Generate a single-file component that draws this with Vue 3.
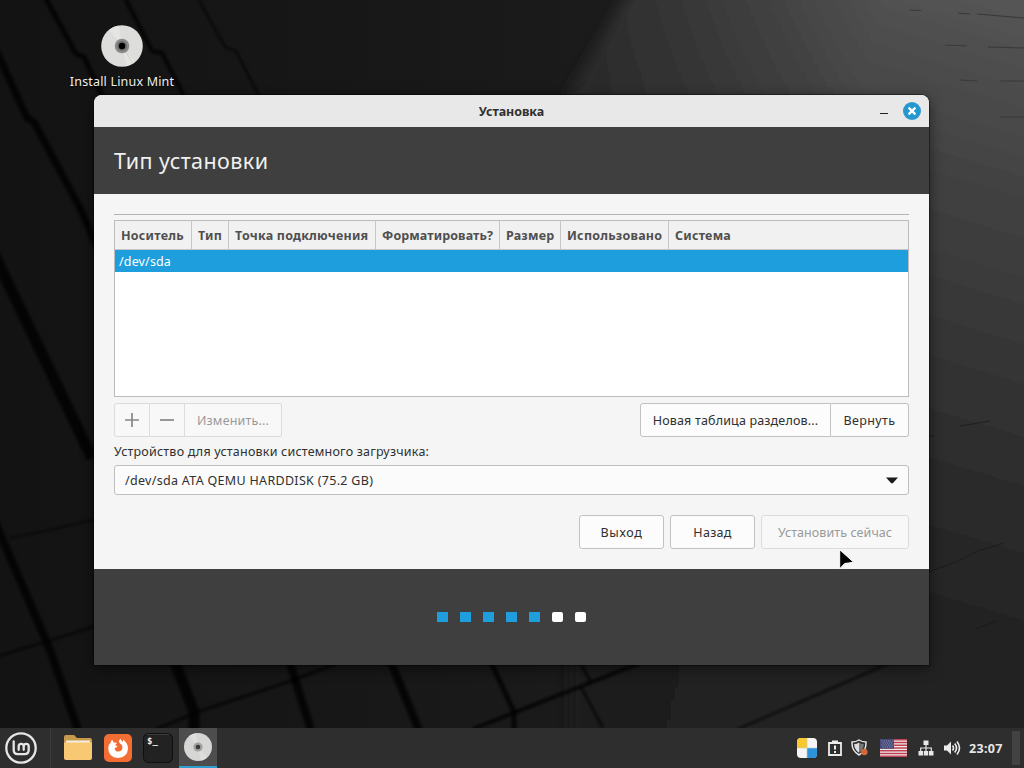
<script setup>
	import {ref} from 'vue'

	const columns = [
		{name: 'Носитель', cls: 'c-dev'},
		{name: 'Тип', cls: 'c-type'},
		{name: 'Точка подключения', cls: 'c-mount'},
		{name: 'Форматировать?', cls: 'c-format'},
		{name: 'Размер', cls: 'c-size'},
		{name: 'Использовано', cls: 'c-used'},
		{name: 'Система', cls: 'c-system'},
	]
	const rows = ['/dev/sda']
	const selected = ref(0)
	const steps = 7
	const step = ref(5)

	// dark gaps between the wallpaper blocks
	const cracks = [
		{d: 'M-4 50L27 118L34 122L82 212L98 250', w: 7},
		{d: 'M44 -5L76 54L84 57L104 100', w: 5},
		{d: 'M122 -8L152 51L162 53L186 100', w: 4},
		{d: 'M199 0L225 47L236 51L260 98', w: 2},
		{d: 'M-8 250L92 458', w: 11},
		{d: 'M-8 515L50 650L78 730', w: 8},
		{d: 'M10 538L50 530L96 519', w: 1.5},
		{d: 'M-2 656L45 642L96 626', w: 2},
		{d: 'M174 660L194 712L194 730', w: 11},
		{d: 'M289 660L311 730', w: 8},
		{d: 'M390 660L419 730', w: 8},
		{d: 'M490 660L514 712L514 730', w: 5},
		{d: 'M580 663L591 682M581 687L603 728', w: 2.5},
		{d: 'M640 663L473 729', w: 4},
		{d: 'M892 662L805 700L738 729', w: 2},
		{d: 'M336 664L288 682L197 712L155 730', w: 2.5},
	]
</script>

<template>
	<div class="screen">
		<svg class="wallpaper" width="1024" height="768" viewBox="0 0 1024 768">
			<defs>
				<linearGradient id="base" x1="0" y1="0" x2="1" y2="0">
					<stop offset="0" stop-color="#131313" />
					<stop offset=".4" stop-color="#181818" />
					<stop offset="1" stop-color="#222" />
				</linearGradient>
				<linearGradient id="light" gradientUnits="userSpaceOnUse" x1="1040" y1="-20" x2="840" y2="640">
					<stop offset="0" stop-color="#585858" />
					<stop offset=".3" stop-color="#424242" />
					<stop offset=".65" stop-color="#2f2f2f" />
					<stop offset="1" stop-color="#202020" />
				</linearGradient>
				<linearGradient id="edge" gradientUnits="userSpaceOnUse" x1="590" y1="40" x2="860" y2="100">
					<stop offset="0" stop-color="#1b1b1b" stop-opacity=".6" />
					<stop offset="1" stop-color="#1b1b1b" stop-opacity="0" />
				</linearGradient>
				<filter id="soft"><feGaussianBlur stdDeviation="7" /></filter>
				<filter id="blur"><feGaussianBlur stdDeviation="1.4" /></filter>
			</defs>
			<rect width="1024" height="768" fill="url(#base)" />
			<g filter="url(#soft)">
				<path d="M642 -30L570 92L570 840H1060V-30z" fill="url(#light)" />
				<path d="M642 -30L570 92L570 840H900V-30z" fill="url(#edge)" />
			</g>
			<g class="cracks" filter="url(#blur)">
				<path v-for="c in cracks" :key="c.d" :d="c.d" :stroke-width="c.w" />
			</g>
			<path class="seams" d="M910 10l11 .5M958 13l12 1M977 14l47 4M945 45l22 1M988 47l36 1M960 80l17 1M1000 81h24M1000 117h24" />
			<path class="faint" d="M928 572L956 562L978 551L1004 543M976 629L996 621M928 436l6 0M960 426l30 -5" />
		</svg>

		<div class="launcher">
			<svg width="42" height="42" viewBox="0 0 42 42">
				<circle cx="21" cy="21" r="20.8" fill="#dddedb" />
				<path d="M21 21L8 5A21 21 0 0 1 18 .5zM21 21L34 37A21 21 0 0 1 26 41z" fill="#e5e5e3" />
				<path d="M21 21L32 39" stroke="#c7d3c8" />
				<circle cx="21" cy="21" r="7.3" fill="#8b8b8b" />
				<circle cx="21" cy="21" r="5" fill="#6c6c6c" />
				<circle cx="21" cy="21" r="3.2" fill="#000" />
			</svg>
			<span>Install Linux Mint</span>
		</div>

		<div class="window">
			<div class="titlebar">
				<b>Установка</b>
				<div class="controls">
					<i class="minimize"></i>
					<svg width="18" height="18" viewBox="0 0 18 18">
						<circle cx="9" cy="9" r="9" fill="#2599cf" />
						<path d="M5.6 5.6l6.800 6.800M12.400 5.600l-6.800 6.800" stroke="#fff" stroke-width="2.200" />
					</svg>
				</div>
			</div>
			<div class="heading"><h1>Тип установки</h1></div>

			<div class="content">
				<div class="rule"></div>
				<div class="table">
					<div class="thead">
						<div v-for="c in columns" :key="c.name" class="th" :class="c.cls"><span>{{ c.name }}</span></div>
					</div>
					<div v-for="(r, i) in rows" :key="r" class="row" :class="{selected: i == selected}" @click="selected = i"><span>{{ r }}</span></div>
				</div>

				<div class="tools">
					<div class="group">
						<button class="btn square" disabled>
							<svg width="16" height="16" viewBox="0 0 16 16"><path d="M8 1v14M1 8h14" /></svg>
						</button>
						<button class="btn square" disabled>
							<svg width="16" height="16" viewBox="0 0 16 16"><path d="M1 8h14" /></svg>
						</button>
						<button class="btn change" disabled><span>Изменить...</span></button>
					</div>
					<div class="group">
						<button class="btn newtable"><span>Новая таблица разделов...</span></button>
						<button class="btn revert"><span>Вернуть</span></button>
					</div>
				</div>

				<div class="label"><span>Устройство для установки системного загрузчика:</span></div>
				<div class="combo">
					<span>/dev/sda ATA QEMU HARDDISK (75.2 GB)</span>
					<svg width="12" height="7" viewBox="0 0 12 7"><path d="M0 .5h12L7 6q-1 .8-2 0z" fill="#1c1c1c" /></svg>
				</div>

				<div class="actions">
					<button class="btn quit"><span>Выход</span></button>
					<button class="btn back"><span>Назад</span></button>
					<button class="btn install" disabled><span>Установить сейчас</span></button>
				</div>
			</div>

			<div class="footer">
				<i v-for="n in steps" :key="n" :class="{done: n <= step}"></i>
			</div>
		</div>

		<div class="panel">
			<div class="start">
				<svg width="32" height="32" viewBox="0 0 32 32" fill="none" stroke="#e6e6e6" stroke-linecap="round">
					<circle cx="16" cy="16" r="14.700" stroke-width="2.300" />
					<path d="M8.700 9.300v8.700q0 4.200 4.200 4.200h6.600q4.200 0 4.200-4.200v-3.600q0-2.500-2.500-2.500t-2.500 2.500v3.400M18.700 14.400q0-2.500-2.500-2.500t-2.500 2.500v3.400" stroke-width="2.300" />
				</svg>
			</div>
			<div class="apps">
				<div class="app">
					<svg width="30" height="28" viewBox="0 0 30 28">
						<path d="M1 3q0-2 2-2h8l3 3h13q2 0 2 2v8H1z" fill="#c89a4c" />
						<path d="M3 6.500h24v8H3z" fill="#f4efe2" />
						<path d="M1 8.500h28V24q0 2-2 2H3q-2 0-2-2z" fill="#f9c872" />
					</svg>
				</div>
				<div class="app">
					<svg width="28" height="28" viewBox="0 0 28 28">
						<rect width="28" height="28" rx="5" fill="#f36d35" />
						<path d="M8 5.500l1.800 3 3.200.4-1.800 2.200 2.300 1.400-3 1.900q1.200 3.700 4.600 3.100 3.600-.7 3.400-4.300-.2-2.500-2.400-3.700-2.600-2.500.5-4.800.5 1.800 2.400 3.200L19 5.500q5 3.800 5 9.100Q23.400 23.700 14 24 4.500 23.500 4.200 14.200 4.300 10.500 6.400 9z" fill="#fff" />
					</svg>
				</div>
				<div class="app">
					<svg width="30" height="30" viewBox="0 0 30 30">
						<rect x=".5" y=".5" width="29" height="29" rx="5" fill="#222" stroke="#0f0f0f" />
						<path d="M4 1.500h22" stroke="#3d3d3d" />
						<text x="4" y="10.500" class="prompt">$_</text>
					</svg>
				</div>
				<div class="app active">
					<svg width="28" height="28" viewBox="0 0 28 28">
						<circle cx="14" cy="14" r="14" fill="#d6d6d4" />
						<path d="M14 14L5 3.300A14 14 0 0 1 12 .2zM14 14l9 10.700a14 14 0 0 1-6 3z" fill="#dededc" />
						<circle cx="14" cy="14" r="4.600" fill="#a0a0a0" />
						<circle cx="14" cy="14" r="2.300" fill="#3a3a3a" />
					</svg>
				</div>
			</div>

			<div class="tray">
				<svg class="t-shield" width="20" height="20" viewBox="0 0 20 20">
					<rect width="20" height="20" rx="4" fill="#f5f5f5" />
					<path d="M4 0h6v10H0V4q0-4 4-4z" fill="#f8c92c" />
					<path d="M10 10h10v6q0 4-4 4h-6z" fill="#2c94da" />
					<path d="M10 0v20M0 10h20" stroke="#c9c9c9" stroke-width=".6" />
				</svg>
				<svg class="t-report" width="14" height="16" viewBox="0 0 14 16">
					<path d="M1 3h12v12H1z" fill="none" stroke="#ececec" stroke-width="1.800" />
					<path d="M4 .5h6V4H4zM6 5.500h2v4H6zM6 11h2v2H6z" fill="#ececec" />
				</svg>
				<svg class="t-update" width="18" height="18" viewBox="0 0 18 18">
					<path d="M8 1q3 2 7 2 .5 9-7 13Q.5 12 1 3q4 0 7-2z" fill="#2d2d2d" stroke="#e4e4e4" stroke-width="1.500" />
					<path d="M8 3.500v10.300Q3.200 10.500 3.200 5 6 5 8 3.500z" fill="#dedede" />
					<path d="M8 3.500v10.300Q12.800 10.500 12.800 5 10 5 8 3.500z" fill="#777" />
					<circle cx="13.300" cy="13" r="3.300" fill="#d4673a" />
				</svg>
				<svg class="t-flag" width="27" height="18" viewBox="0 0 27 18">
					<rect width="27" height="18" fill="#f0e9ea" />
					<path d="M0 .7h27M0 3.500h27M0 6.250h27M0 9h27M0 11.800h27M0 14.500h27M0 17.300h27" stroke="#bd4252" stroke-width="1.400" />
					<rect width="14" height="9.700" fill="#454a78" />
					<path d="M1.500 2h12M2.500 4h11M1.500 6h12M2.500 8h11" stroke="#a9abc4" stroke-width=".8" stroke-dasharray="1 1.200" />
				</svg>
				<svg class="t-net" width="16" height="16" viewBox="0 0 16 16" fill="#e8e8e8">
					<path d="M5.500 0.500h5v4.500h-5zM0.500 11h4.500v4.500H.5zM5.800 11h4.400v4.500H5.800zM11 11h4.500v4.500H11z" />
					<path d="M8 5v6M2.700 11V8h10.600v3" fill="none" stroke="#e8e8e8" stroke-width="1.200" />
				</svg>
				<svg class="t-sound" width="17" height="16" viewBox="0 0 17 16">
					<path d="M0 5.500h3l4-4v13l-4-4H0z" fill="#ececec" />
					<path d="M8.500 5.500q2 2.500 0 5M10.700 3.500q3.600 4.500 0 9M13 1.500q5 6.500 0 13" fill="none" stroke="#ececec" stroke-width="1.600" />
				</svg>
				<span class="clock">23:07</span>
				<i class="show-desktop"></i>
			</div>
		</div>

		<svg class="pointer" width="20" height="24" viewBox="0 0 20 24">
			<path d="M2.700 1.700v19l5-5.200 9-1.200z" fill="#000" stroke="#fff" stroke-width="1" />
		</svg>
	</div>
</template>

<style>
	body{
		margin: 0;
		overflow: hidden;
	}
</style>

<style scoped>
	.screen{
		position: relative;
		width: 1024px;
		height: 768px;
		overflow: hidden;
		background: #151515;
		color: #303030;
		font-family: "Noto Sans", "Open Sans", sans-serif;
		font-size: 12.5px;
		display: flex;
		flex-direction: column;
		justify-content: flex-end;
	}
	.screen *{box-sizing: border-box;}
	svg{display: block; flex: none;}
	span, b, h1{white-space: nowrap;}

	.wallpaper{position: absolute; left: 0; top: 0;}
	.cracks path{fill: none; stroke: #050505; stroke-opacity: .8;}
	.seams{fill: none; stroke: #383838; stroke-width: 1;}
	.faint{fill: none; stroke: #171717; stroke-width: 1; stroke-opacity: .7;}

	.launcher{
		position: absolute;
		left: 62px;
		top: 25px;
		width: 120px;
		display: flex;
		flex-direction: column;
		align-items: center;
		gap: 6px;
		color: #f0f0f0;
		line-height: 17px;
		letter-spacing: .18px;
		text-shadow: 0 1px 2px #000;
	}

	.window{
		position: absolute;
		left: 94px;
		top: 95px;
		width: 835px;
		height: 570px;
		display: flex;
		flex-direction: column;
		border-radius: 8px 8px 0 0;
		background: #f5f5f5;
		overflow: hidden;
		box-shadow: 0 0 0 1px rgba(0,0,0,.35), 0 3px 14px rgba(0,0,0,.55);
	}
	.titlebar{
		position: relative;
		height: 32px;
		background: #e8e8e8;
		display: flex;
		align-items: center;
		justify-content: center;
		letter-spacing: -.05px;
	}
	.controls{
		position: absolute;
		right: 8px;
		top: 7px;
		display: flex;
		gap: 15px;
	}
	.minimize{width: 8px; height: 1px; margin-top: 11px; background: #222;}
	.heading{
		height: 67px;
		padding-left: 20px;
		background: #3f3f3f;
		display: flex;
		align-items: center;
	}
	h1{
		margin: 0;
		color: #f0f0f0;
		font-size: 21.5px;
		font-weight: 400;
		letter-spacing: .42px;
	}

	.content{
		height: 375px;
		padding: 20px 20px 0;
	}
	.rule{height: 1px; background: #b4b4b4; margin-bottom: 5px;}
	.table{
		height: 177px;
		border: 1px solid #bcbcbc;
		background: #fff;
	}
	.thead{
		display: flex;
		height: 29px;
		background: #f1f1f1;
		color: #4f4f4f;
		font-weight: 700;
		letter-spacing: .22px;
		border-bottom: 1px solid #c6c6c6;
	}
	.th{
		padding-left: 6px;
		line-height: 29px;
		border-right: 1px solid #c6c6c6;
		flex: none;
	}
	.th:last-child{border: 0;}
	.c-dev{width: 77px;}
	.c-type{width: 37px;}
	.c-mount{width: 147px;}
	.c-format{width: 124px; letter-spacing: .1px;}
	.c-size{width: 61px;}
	.c-used{width: 108px;}
	.row{
		height: 22px;
		line-height: 23px;
		padding-left: 4px;
		letter-spacing: .15px;
	}
	.row.selected{background: #1f9ede; color: #fff;}

	.tools{
		display: flex;
		justify-content: space-between;
		margin-top: 6px;
	}
	.group{display: flex;}
	.btn{
		height: 34px;
		padding: 0;
		border: 1px solid #c2c2c2;
		border-radius: 3px;
		background: #fcfcfc;
		color: #303030;
		font: inherit;
		letter-spacing: .17px;
		display: flex;
		align-items: center;
		justify-content: center;
	}
	.btn:disabled{
		border-color: #dcdcdc;
		background: #f8f8f8;
		color: #9a9a9a;
	}
	.group .btn:not(:last-child){
		border-top-right-radius: 0;
		border-bottom-right-radius: 0;
	}
	.group .btn:not(:first-child){
		border-top-left-radius: 0;
		border-bottom-left-radius: 0;
		border-left: 0;
	}
	.square{width: 35px;}
	.square:first-child{width: 36px;}
	.square path{fill: none; stroke: #868686; stroke-width: 1.7;}
	.change{width: 97px;}
	.newtable{width: 191px;}
	.revert{width: 78px; letter-spacing: .4px;}

	.label{line-height: 29px; height: 28px; letter-spacing: .21px;}
	.combo{
		height: 30px;
		padding: 0 10px;
		border: 1px solid #bfbfbf;
		border-radius: 3px;
		background: #fbfbfb;
		letter-spacing: .31px;
		display: flex;
		align-items: center;
		justify-content: space-between;
	}
	.actions{
		margin-top: 20px;
		display: flex;
		justify-content: flex-end;
		gap: 6px;
	}
	.quit, .back{width: 85px;}
	.quit{letter-spacing: .7px;}
	.back{letter-spacing: .3px;}
	.install{width: 148px; letter-spacing: .08px;}

	.footer{
		height: 96px;
		background: #3f3f3f;
		display: flex;
		align-items: center;
		justify-content: center;
		gap: 12px;
	}
	.footer i{
		width: 11px;
		height: 10px;
		border-radius: 2px;
		background: #fff;
	}
	.footer .done{background: #1f9ede; border-radius: 0;}

	.panel{
		position: relative;
		height: 40px;
		background: #2e2e2e;
		display: flex;
		align-items: center;
		flex: none;
	}
	.start{
		width: 51px;
		height: 40px;
		padding-left: 5px;
		border-right: 1px solid #3c3c3c;
		display: flex;
		align-items: center;
	}
	.apps{display: flex; padding-left: 8px; gap: 2px;}
	.app{
		width: 38px;
		height: 40px;
		display: flex;
		align-items: center;
		justify-content: center;
	}
	.app.active{background: #4d4d4d; border-bottom: 2px solid #2f9ecf;}
	.prompt{
		fill: #f4f4f4;
		font: 700 9px "DejaVu Sans Mono", monospace;
	}
	.tray{
		margin-left: auto;
		margin-right: 4px;
		display: flex;
		align-items: center;
		color: #e6e6e6;
		font-weight: 700;
	}
	.t-report{margin-left: 11px;}
	.t-update{margin-left: 9px;}
	.t-flag{margin-left: 11px;}
	.t-net{margin-left: 11px;}
	.t-sound{margin-left: 10px;}
	.clock{margin-left: 8px; width: 35px; letter-spacing: .3px;}
	.show-desktop{width: 8px; height: 34px; margin-left: 8px; background: #424242;}

	.pointer{position: absolute; left: 837px; top: 548px;}
</style>
